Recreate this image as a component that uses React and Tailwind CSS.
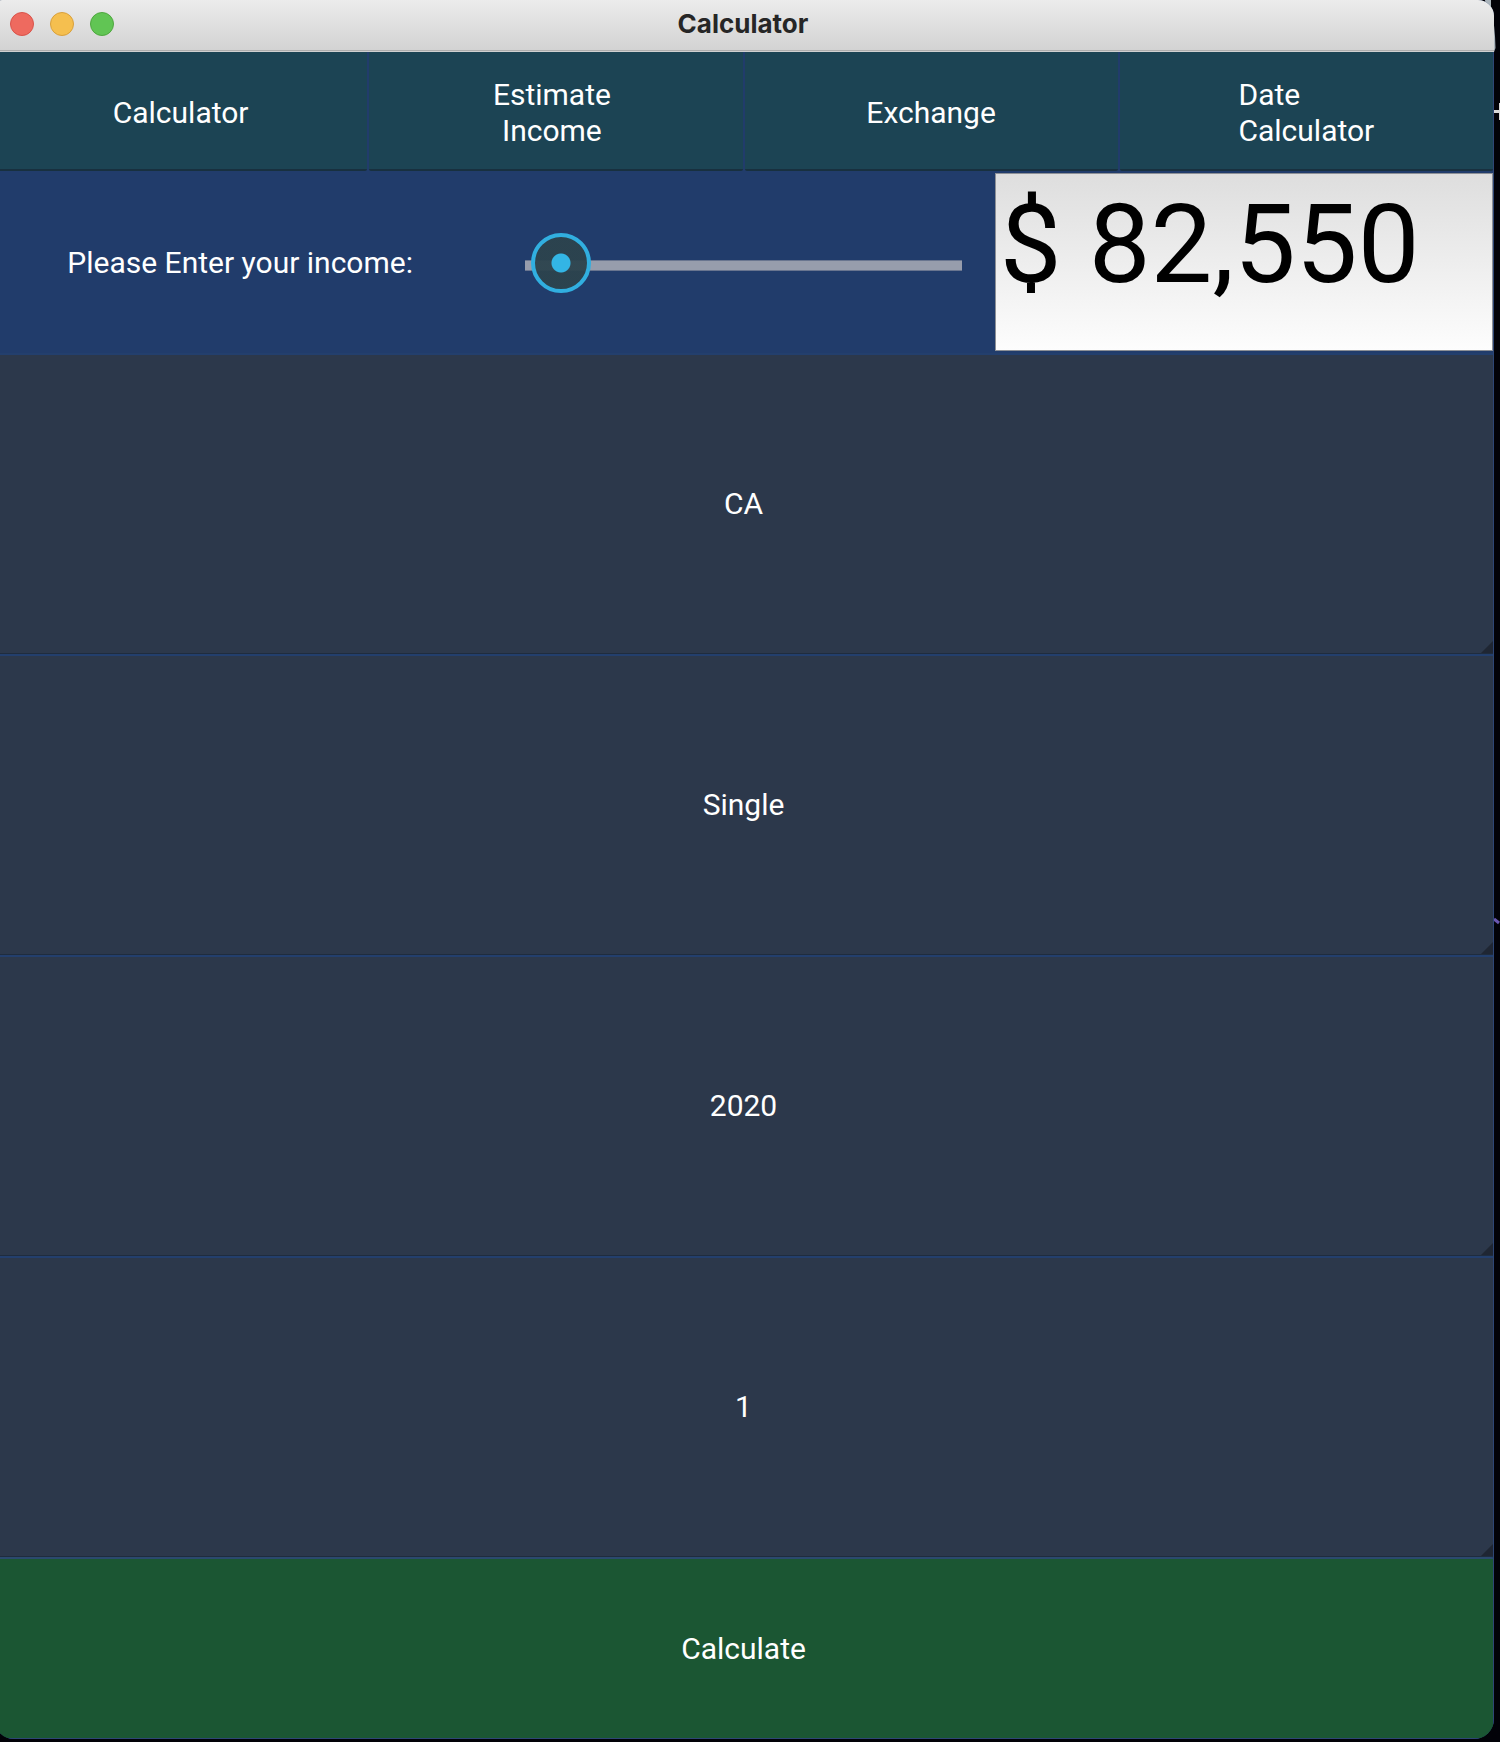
import { useState } from "react";

const TABS = [
  { lines: ["Calculator"], align: "text-center" },
  { lines: ["Estimate", "Income"], align: "pr-2 text-center" },
  { lines: ["Exchange"], align: "text-center" },
  { lines: ["Date", "Calculator"], align: "text-left" },
];

const FIELDS = [
  { label: "State", options: ["CA", "NY", "TX", "WA"] },
  { label: "Filing status", options: ["Single", "Married"] },
  { label: "Tax year", options: ["2020", "2019", "2018"] },
  { label: "Allowances", options: ["1", "2", "3", "4"] },
];

function TitleBar() {
  return (
    <header className="relative flex h-[52px] shrink-0 items-center justify-center border-b border-[#d0d0d0] bg-linear-to-b from-[#ececec] to-[#d2d2d2] pr-0.5 pb-1 shadow-[inset_0_-1px_0_#adadad]">
      <div className="absolute top-3 left-4 flex gap-4">
        <button aria-label="Close" className="size-6 rounded-full border border-[#d9534a] bg-[#ee6a5f]" />
        <button aria-label="Minimize" className="size-6 rounded-full border border-[#d9a03c] bg-[#f5bf4f]" />
        <button aria-label="Zoom" className="size-6 rounded-full border border-[#4fa73f] bg-[#61c554]" />
      </div>
      <h1 className="font-[Inter,sans-serif] text-[26px] leading-8 font-bold text-[#262626]">Calculator</h1>
    </header>
  );
}

function Spinner({ label, options }) {
  return (
    <div className="relative border-t-2 border-[#233f6d]">
      <select
        aria-label={label}
        className="block h-full w-full appearance-none border-b border-[#1f2c3e] bg-[#2c384b] text-center [text-align-last:center]"
      >
        {options.map((o) => (
          <option key={o}>{o}</option>
        ))}
      </select>
      <svg className="pointer-events-none absolute right-0 bottom-px size-3" viewBox="0 0 12 12" aria-hidden="true">
        <path d="M12 0V12H0Z" fill="#1f2633" />
      </svg>
    </div>
  );
}

export default function App() {
  const [income, setIncome] = useState(82550);

  return (
    <div className="relative h-screen min-h-[900px] overflow-hidden bg-[#020208] pr-1.5 pb-[3px] font-[Roboto,sans-serif] text-[30px] leading-9 text-white">
      <svg className="absolute top-0 right-0 h-[60px] w-5" viewBox="0 0 20 60" aria-hidden="true">
        <path d="M5 0H11V10Q15 24 15.500 48L14 52H10Z" fill="#a9b3ba" />
      </svg>
      <svg className="absolute top-[100px] right-0 h-5 w-1.5" viewBox="0 0 6 20" aria-hidden="true">
        <path d="M0 10H5V3H6V20H5V13H0Z" fill="#d8d8d8" />
      </svg>
      <svg className="absolute top-[915px] right-0 h-3 w-1.5" viewBox="0 0 6 12" aria-hidden="true">
        <path d="M0 4L5 8" stroke="#6a56b0" strokeWidth="3" />
      </svg>

      <main className="relative -ml-1.5 flex h-full flex-col overflow-hidden rounded-tl-lg rounded-tr-[16px] rounded-b-[20px] bg-[#213c6b]">
        <TitleBar />
        <div className="grid min-h-0 flex-1 grid-rows-[4fr_6fr_10fr_10fr_10fr_10fr_6fr] border-r border-b border-[#2e4675]">
          <nav className="grid grid-cols-4 gap-0.5 pb-px">
            {TABS.map(({ lines, align }) => (
              <button
                key={lines.join(" ")}
                className="flex items-center justify-center rounded-b-xs border-b-2 border-[#18303f] bg-[#1c4454] pt-1"
              >
                <span className={align}>
                  {lines.map((line) => (
                    <span key={line} className="block">
                      {line}
                    </span>
                  ))}
                </span>
              </button>
            ))}
          </nav>

          <section className="grid min-h-0 grid-cols-3 grid-rows-[minmax(0,1fr)] items-center gap-0.5">
            <label htmlFor="income" className="pr-1.5 text-center">
              Please Enter your income:
            </label>
            <input
              id="income"
              type="range"
              min="0"
              max="1000000"
              step="50"
              value={income}
              onChange={(e) => setIncome(Number(e.target.value))}
              className="mx-px h-[60px] appearance-none bg-[linear-gradient(#69758f_0_1px,#979dac_1px_10px,#69758f_10px_11px)] bg-[length:calc(100%-60px)_11px] bg-[position:50%_27px] bg-no-repeat [&::-webkit-slider-thumb]:size-[60px] [&::-webkit-slider-thumb]:appearance-none [&::-webkit-slider-thumb]:rounded-full [&::-webkit-slider-thumb]:border-4 [&::-webkit-slider-thumb]:border-[#31afe0] [&::-webkit-slider-thumb]:bg-[radial-gradient(circle,#33b5e5_0_9px,#2c434df2_10px)] [&::-webkit-slider-thumb]:bg-origin-border"
            />
            <div className="h-full pt-px pb-0.5">
              <input
                type="text"
                aria-label="Income"
                readOnly
                value={`$ ${income.toLocaleString("en-US")}`}
                className="block h-full w-full border border-[#8d9096] bg-linear-to-b from-[#dedede] to-[#fdfdfd] pt-1 pr-1 pb-10 pl-1 text-[110px] leading-[128px] text-black"
              />
            </div>
          </section>

          {FIELDS.map((f) => (
            <Spinner key={f.label} {...f} />
          ))}

          <button className="rounded-t-xs border-t-2 border-[#2b4a6e] bg-[#1b5633]">Calculate</button>
        </div>
      </main>
    </div>
  );
}
